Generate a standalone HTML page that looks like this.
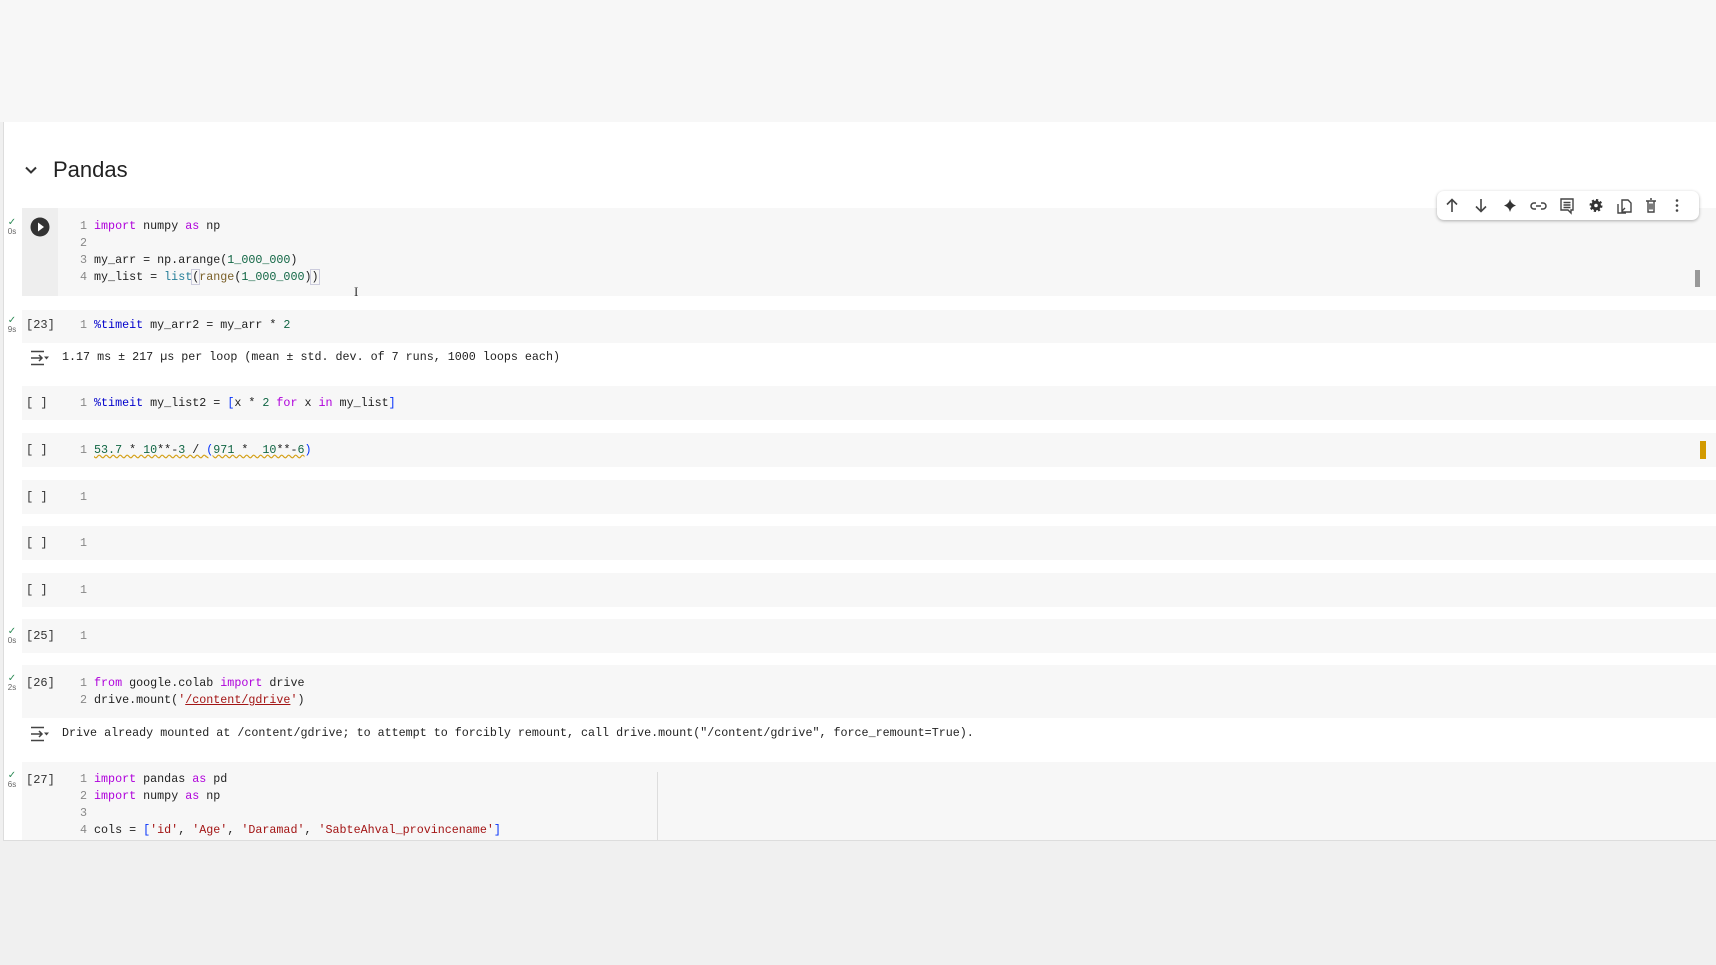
<!DOCTYPE html>
<html><head><meta charset="utf-8"><style>
*{margin:0;padding:0;box-sizing:border-box}
body{width:1716px;height:965px;background:#f0f0f0;position:relative;overflow:hidden;font-family:"Liberation Sans",sans-serif}
.top{position:absolute;left:0;top:0;width:1716px;height:122px;background:#f7f7f7}
.panel{position:absolute;left:3px;top:122px;width:1713px;height:719px;background:#fff;border-left:1px solid #ddd;border-bottom:1px solid #ddd}
.cell{position:absolute;left:22px;width:1694px;background:#f7f7f7}
.m{font-family:"Liberation Mono",monospace;font-size:11.7px;color:#222;position:absolute;white-space:pre;line-height:17px}
.ln{color:#888}
.k{color:#af00db}.n{color:#116644}.s{color:#a31515}.b{color:#267f99}.f{color:#795e26}.bl{color:#0431fa}.mg{color:#0000cc}
.ck{position:absolute;left:7px;font-size:8px;color:#666;font-family:"Liberation Sans",sans-serif;line-height:9px;text-align:center;width:10px}
.ck b{display:block;color:#2e8b57;font-weight:normal;font-size:10px}
.ex{position:absolute;left:26px;font-family:"Liberation Mono",monospace;font-size:12px;color:#333}
</style></head><body>
<div class="top"></div>
<div class="panel"></div>
<svg style="position:absolute;left:24px;top:163px" width="14" height="14" viewBox="0 0 14 14"><path d="M2 4.5L7 9.5L12 4.5" stroke="#333" stroke-width="2" fill="none"/></svg>
<div style="position:absolute;left:53px;top:157px;font-size:22px;color:#222">Pandas</div>

<!-- cell 1 -->
<div class="cell" style="top:208px;height:88px"><div style="position:absolute;left:0;top:0;width:36px;height:88px;background:#eeeeee"></div></div>
<div class="ck" style="top:218px"><b>✓</b>0s</div>
<svg style="position:absolute;left:30px;top:217px" width="20" height="20"><circle cx="10" cy="10" r="9.5" fill="#333"/><path d="M8 5.5L14 10L8 14.5Z" fill="#fff"/></svg>
<div class="m" style="left:80px;top:218px"><span class="ln">1</span> <span class="k">import</span> numpy <span class="k">as</span> np
<span class="ln">2</span>
<span class="ln">3</span> my_arr = np.arange(<span class="n">1_000_000</span>)
<span class="ln">4</span> my_list = <span class="b">list</span><span style="outline:1px solid #ccd">(</span><span class="f">range</span>(<span class="n">1_000_000</span>)<span style="outline:1px solid #ccd">)</span></div>
<div style="position:absolute;left:354px;top:284px;font-size:13px;color:#333;font-family:'Liberation Serif',serif">I</div>
<div style="position:absolute;left:1437px;top:191px;width:262px;height:29px;background:#fff;border-radius:7px;box-shadow:0 1px 3px rgba(0,0,0,.3)">
<svg width="262" height="29" viewBox="0 0 262 29" fill="none" stroke="#444" stroke-width="1.6">
<path d="M15 21V9M10 13.5L15 8.5L20 13.5"/>
<path d="M44 8V20M39 15.5L44 20.5L49 15.5"/>
<path d="M73 8Q74 13 79 14.5Q74 16 73 21Q72 16 67 14.5Q72 13 73 8Z" fill="#333" stroke="none"/>
<path d="M99 12H97a3 3 0 0 0 0 6h2M104 12h2a3 3 0 0 1 0 6h-2M99 15h5" stroke-width="1.5"/>
<path d="M124 8h12v11h-2v3l-3-3h-7z M126.5 11.5h7M126.5 14h7M126.5 16.5h7" stroke-width="1.4"/>
<circle cx="159" cy="14.5" r="5" fill="#333" stroke="#333" stroke-width="3" stroke-dasharray="2 1.9"/><circle cx="159" cy="14.5" r="1.8" fill="#fff" stroke="none"/>
<path d="M185 9h6l3 3v9h-9zM181 13v9h8M185 20l3-3" stroke-width="1.4"/>
<path d="M209 10h10M211 10v11h6V10M213 8h2M213 12.5v6M215 12.5v6" stroke-width="1.4"/>
<circle cx="240" cy="9.5" r="1.3" fill="#444" stroke="none"/><circle cx="240" cy="14.5" r="1.3" fill="#444" stroke="none"/><circle cx="240" cy="19.5" r="1.3" fill="#444" stroke="none"/>
</svg></div>
<div style="position:absolute;left:1695px;top:270px;width:5px;height:17px;background:#999"></div>

<!-- cell 23 -->
<div class="cell" style="top:310px;height:33px"></div>
<div class="ck" style="top:316px"><b>✓</b>9s</div>
<div class="ex" style="top:318px">[23]</div>
<div class="m" style="left:80px;top:317px"><span class="ln">1</span> <span class="mg">%timeit</span> my_arr2 = my_arr * <span class="n">2</span></div>
<svg style="position:absolute;left:30px;top:350px" width="20" height="16" fill="none" stroke="#444" stroke-width="1.5"><path d="M1 1.5h13M1 14.5h13M1 8h11M9 5l3 3-3 3"/><path d="M14 6.5h5l-2.5 3z" fill="#444" stroke="none"/></svg>
<div class="m" style="left:62px;top:349px">1.17 ms ± 217 µs per loop (mean ± std. dev. of 7 runs, 1000 loops each)</div>

<div class="cell" style="top:386px;height:34px"></div>
<div class="ex" style="top:396px">[ ]</div>
<div class="m" style="left:80px;top:395px"><span class="ln">1</span> <span class="mg">%timeit</span> my_list2 = <span class="bl">[</span>x * <span class="n">2</span> <span class="k">for</span> x <span class="k">in</span> my_list<span class="bl">]</span></div>

<div class="cell" style="top:433px;height:34px"></div>
<div class="ex" style="top:443px">[ ]</div>
<div class="m" style="left:80px;top:442px"><span class="ln">1</span> <span style="text-decoration:underline wavy #d4a017"><span class="n">53.7</span> * <span class="n">10</span>**-<span class="n">3</span> / <span class="bl">(</span><span class="n">971</span> *  <span class="n">10</span>**-<span class="n">6</span></span><span class="bl">)</span></div>
<div style="position:absolute;left:1700px;top:441px;width:6px;height:18px;background:#d29a00"></div>

<div class="cell" style="top:480px;height:34px"></div>
<div class="ex" style="top:490px">[ ]</div>
<div class="m" style="left:80px;top:489px"><span class="ln">1</span></div>
<div class="cell" style="top:526px;height:34px"></div>
<div class="ex" style="top:536px">[ ]</div>
<div class="m" style="left:80px;top:535px"><span class="ln">1</span></div>
<div class="cell" style="top:573px;height:34px"></div>
<div class="ex" style="top:583px">[ ]</div>
<div class="m" style="left:80px;top:582px"><span class="ln">1</span></div>
<div class="cell" style="top:619px;height:34px"></div>
<div class="ck" style="top:627px"><b>✓</b>0s</div>
<div class="ex" style="top:629px">[25]</div>
<div class="m" style="left:80px;top:628px"><span class="ln">1</span></div>

<div class="cell" style="top:665px;height:53px"></div>
<div class="ck" style="top:674px"><b>✓</b>2s</div>
<div class="ex" style="top:676px">[26]</div>
<div class="m" style="left:80px;top:675px"><span class="ln">1</span> <span class="k">from</span> google.colab <span class="k">import</span> drive
<span class="ln">2</span> drive.mount(<span class="s">'<span style="text-decoration:underline #a31515">/content/gdrive</span>'</span>)</div>
<svg style="position:absolute;left:30px;top:726px" width="20" height="16" fill="none" stroke="#444" stroke-width="1.5"><path d="M1 1.5h13M1 14.5h13M1 8h11M9 5l3 3-3 3"/><path d="M14 6.5h5l-2.5 3z" fill="#444" stroke="none"/></svg>
<div class="m" style="left:62px;top:725px">Drive already mounted at /content/gdrive; to attempt to forcibly remount, call drive.mount("/content/gdrive", force_remount=True).</div>

<div class="cell" style="top:762px;height:78px"></div>
<div style="position:absolute;left:657px;top:772px;width:1px;height:68px;background:#ddd"></div>
<div class="ck" style="top:771px"><b>✓</b>6s</div>
<div class="ex" style="top:773px">[27]</div>
<div class="m" style="left:80px;top:771px"><span class="ln">1</span> <span class="k">import</span> pandas <span class="k">as</span> pd
<span class="ln">2</span> <span class="k">import</span> numpy <span class="k">as</span> np
<span class="ln">3</span>
<span class="ln">4</span> cols = <span class="bl">[</span><span class="s">'id'</span>, <span class="s">'Age'</span>, <span class="s">'Daramad'</span>, <span class="s">'SabteAhval_provincename'</span><span class="bl">]</span></div>
</body></html>
